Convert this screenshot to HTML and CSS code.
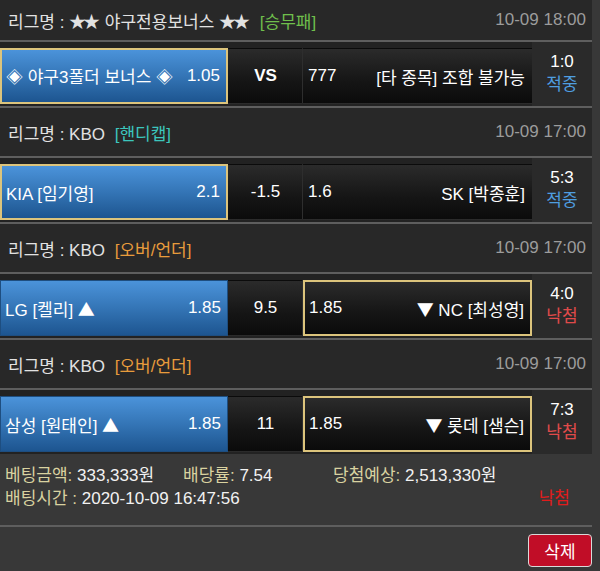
FILE: index.html
```html
<!DOCTYPE html>
<html lang="ko">
<head>
<meta charset="utf-8">
<title>베팅내역</title>
<link rel="stylesheet" href="styles.css">
</head>
<body>
<div class="list">
  <div class="league league-first">
    <div class="league-name">리그명 : <span class="sym">★★</span> 야구전용보너스 <span class="sym">★★</span> <span class="type type-green">[승무패]</span></div>
    <div class="league-date">10-09 18:00</div>
  </div>
  <div class="match">
    <div class="cell home picked"><span><span class="sym">◈</span> 야구3폴더 보너스 <span class="sym">◈</span></span><span>1.05</span></div>
    <div class="cell mid vs">VS</div>
    <div class="cell away"><span>777</span><span>[타 종목] 조합 불가능</span></div>
    <div class="result"><span>1:0</span><span class="win">적중</span></div>
  </div>

  <div class="league">
    <div class="league-name">리그명 : KBO <span class="type type-teal">[핸디캡]</span></div>
    <div class="league-date">10-09 17:00</div>
  </div>
  <div class="match">
    <div class="cell home picked"><span>KIA [임기영]</span><span>2.1</span></div>
    <div class="cell mid">-1.5</div>
    <div class="cell away"><span>1.6</span><span>SK [박종훈]</span></div>
    <div class="result"><span>5:3</span><span class="win">적중</span></div>
  </div>

  <div class="league">
    <div class="league-name">리그명 : KBO <span class="type type-orange">[오버/언더]</span></div>
    <div class="league-date">10-09 17:00</div>
  </div>
  <div class="match">
    <div class="cell home"><span>LG [켈리] <span class="sym">▲</span></span><span>1.85</span></div>
    <div class="cell mid">9.5</div>
    <div class="cell away picked"><span>1.85</span><span><span class="sym">▼</span> NC [최성영]</span></div>
    <div class="result"><span>4:0</span><span class="lose">낙첨</span></div>
  </div>

  <div class="league">
    <div class="league-name">리그명 : KBO <span class="type type-orange">[오버/언더]</span></div>
    <div class="league-date">10-09 17:00</div>
  </div>
  <div class="match">
    <div class="cell home"><span>삼성 [원태인] <span class="sym">▲</span></span><span>1.85</span></div>
    <div class="cell mid">11</div>
    <div class="cell away picked"><span>1.85</span><span><span class="sym">▼</span> 롯데 [샘슨]</span></div>
    <div class="result"><span>7:3</span><span class="lose">낙첨</span></div>
  </div>

  <div class="summary">
    <div class="summary-line">
      <span class="item item-amount"><span class="label">베팅금액:</span> 333,333원</span>
      <span class="item item-rate"><span class="label">배당률:</span> 7.54</span>
      <span class="item"><span class="label">당첨예상:</span> 2,513,330원</span>
    </div>
    <div class="summary-line">
      <span class="item"><span class="label">배팅시간 :</span> 2020-10-09 16:47:56</span>
      <span class="final">낙첨</span>
    </div>
  </div>
  <div class="actions">
    <button class="btn-delete" type="button">삭제</button>
  </div>
</div>
</body>
</html>
```
FILE: styles.css
```css
html, body {
  margin: 0;
  padding: 0;
}
body {
  background: #383838;
  font-family: "Liberation Sans", Arial, "Noto Sans CJK KR", sans-serif;
  font-size: 17px;
  color: #ffffff;
  width: 600px;
  height: 571px;
  overflow: hidden;
}
.list {
  width: 592px;
}
.sym {
  font-family: "Noto Sans CJK KR", sans-serif;
  letter-spacing: -3px;
  margin-right: 3px;
}
.league {
  height: 50px;
  background: #282828;
  border-top: 2px solid #5e5e5e;
  display: flex;
  align-items: center;
  justify-content: space-between;
  padding: 0 6px 0 8px;
  box-sizing: border-box;
}
.league-first {
  height: 40px;
  border-top: 0;
}
.league-name {
  color: #e2e2e2;
}
.type {
  margin-left: 5px;
}
.type-green { color: #6fbf4c; }
.type-teal { color: #3cc6bd; }
.type-orange { color: #e89c3c; }
.league-date {
  color: #9c9c9c;
}
.match {
  border-top: 2px solid #5e5e5e;
  background: #222222;
  display: grid;
  grid-template-columns: 228px 75px 229px 60px;
  padding: 6px 0 2px;
}
.cell {
  height: 56px;
  box-sizing: border-box;
  display: flex;
  align-items: center;
  justify-content: space-between;
  padding: 0 6px 0 4px;
  background: linear-gradient(#2b2b2b, #151515 60%, #0b0b0b);
  border: 1px solid transparent;
  white-space: nowrap;
}
.cell.home {
  background: linear-gradient(#4b93da, #3475b6 50%, #1d5590);
  border-color: #1e4e80;
}
.cell.mid {
  justify-content: center;
  border-right: 1px solid #2e2e2e;
  padding: 0;
}
.vs {
  font-weight: bold;
}
.cell.picked {
  border: 2px solid #dcc47c;
}
.result {
  background: #2a2a2a;
  margin: -6px 0 -2px;
  display: flex;
  flex-direction: column;
  align-items: center;
  justify-content: center;
  line-height: 23px;
  padding-bottom: 2px;
}
.win { color: #4f9ee0; }
.lose { color: #e04a4a; }
.summary {
  padding: 10px 0 15px 5px;
  line-height: 23px;
}
.summary-line {
  display: flex;
  align-items: center;
}
.item {
  color: #f2f2f2;
}
.label {
  color: #d9d2a0;
}
.item-amount {
  width: 178px;
}
.item-rate {
  width: 150px;
}
.final {
  margin-left: auto;
  margin-right: 22px;
  color: #e01c1c;
}
.actions {
  border-top: 2px solid #5e5e5e;
  display: flex;
  justify-content: flex-end;
  padding-top: 7px;
}
.btn-delete {
  width: 64px;
  height: 33px;
  background: #c10d27;
  border: 1px solid #d9d9d9;
  border-radius: 4px;
  color: #ffffff;
  font-family: "Liberation Sans", Arial, "Noto Sans CJK KR", sans-serif;
  font-size: 17px;
  padding: 0;
}
```
